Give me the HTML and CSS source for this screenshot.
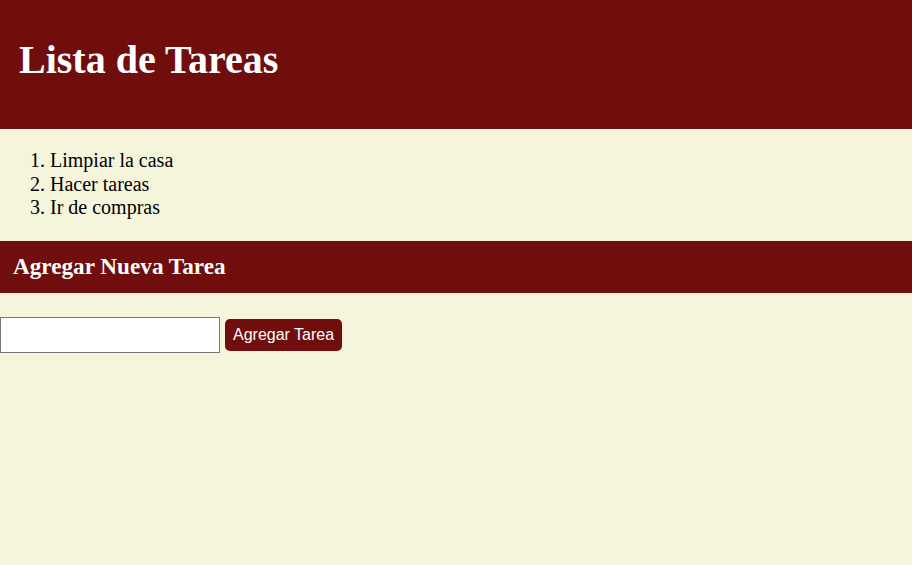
FILE: index.html
```html
<!DOCTYPE html>
<html lang="es">
<head>
<meta charset="utf-8">
<title>Lista de Tareas</title>
<link rel="stylesheet" href="styles.css">
</head>
<body>
<header class="site-header">
  <h1 class="title">Lista de Tareas</h1>
</header>
<main>
  <ol class="tasks">
    <li>Limpiar la casa</li>
    <li>Hacer tareas</li>
    <li>Ir de compras</li>
  </ol>
  <h2 class="section-title">Agregar Nueva Tarea</h2>
  <form class="add-form">
    <input class="task-input" type="text">
    <button class="add-btn" type="button">Agregar Tarea</button>
  </form>
</main>
</body>
</html>
```
FILE: styles.css
```css
html, body {
  margin: 0;
  padding: 0;
  background: #f5f5dc;
  font-family: "Liberation Serif", "Times New Roman", serif;
  color: #000;
}
.site-header {
  background: #700d0d;
  padding: 18px 19px 28px;
  height: 83px;
  display: flex;
  align-items: center;
}
.title {
  margin: 0;
  color: #fff;
  font-size: 40px;
  font-weight: bold;
}
.tasks {
  margin: 20px 0 21px;
  padding-left: 50px;
  font-size: 20px;
  line-height: 23.5px;
}
.section-title {
  margin: 0;
  background: #700d0d;
  color: #fff;
  font-size: 23.2px;
  height: 52px;
  padding: 0 13px;
  display: flex;
  align-items: center;
}
.add-form {
  display: flex;
  align-items: center;
  gap: 5px;
  margin-top: 24px;
}
.task-input {
  width: 220px;
  height: 36px;
  box-sizing: border-box;
  border: 1px solid #767676;
  background: #fff;
  margin: 0;
}
.add-btn {
  background: #700d0d;
  color: #fff;
  border: none;
  border-radius: 5px;
  height: 32px;
  padding: 0 8px;
  font-family: "Liberation Sans", Arial, sans-serif;
  font-size: 16px;
}
```
